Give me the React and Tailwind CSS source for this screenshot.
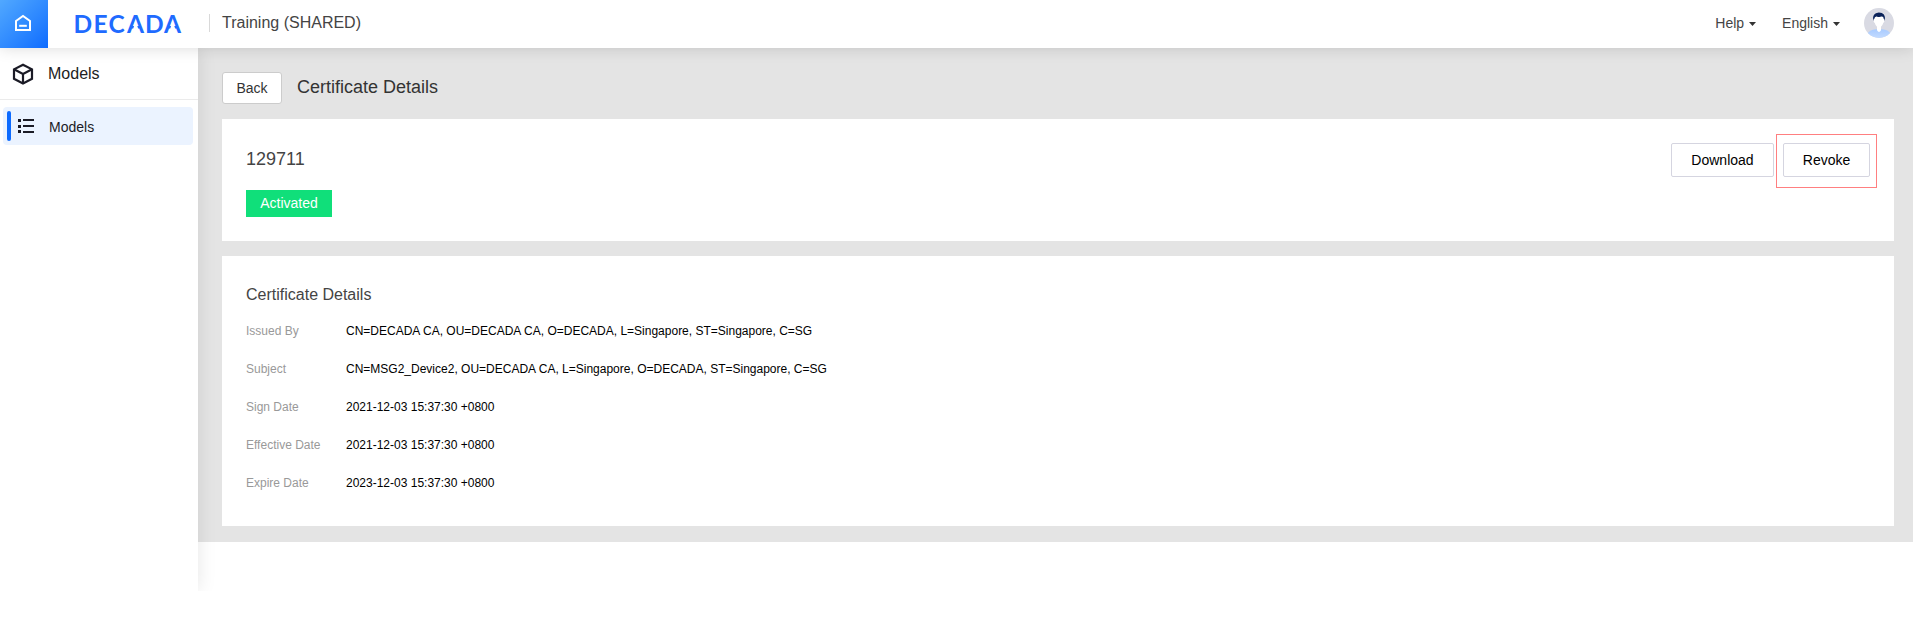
const rows = [
  ['Issued By', 'CN=DECADA CA, OU=DECADA CA, O=DECADA, L=Singapore, ST=Singapore, C=SG'],
  ['Subject', 'CN=MSG2_Device2, OU=DECADA CA, L=Singapore, O=DECADA, ST=Singapore, C=SG'],
  ['Sign Date', '2021-12-03 15:37:30 +0800'],
  ['Effective Date', '2021-12-03 15:37:30 +0800'],
  ['Expire Date', '2023-12-03 15:37:30 +0800'],
];

function HomeIcon() {
  return (
    <svg width="18" height="18" viewBox="0 0 18 18" fill="none" stroke="white" strokeWidth="2">
      <path d="M2 7 L9 1.9 L16 7 V16 H2 Z" />
      <path d="M5.2 11.8 H12.8" />
    </svg>
  );
}

function Logo() {
  return (
    <svg width="114" height="40" viewBox="0 0 114 40" className="font-['Lato','Liberation_Sans',sans-serif]">
      <text x="1.5 21.5 36.5 55 73 92" y="28.5" fontSize="24.5" fontWeight="700" fill="#1f6bff">
        DECADA
      </text>
      <g fill="white">
        <path d="M60 28.6 L63.7 17 L67.4 28.6 Z" />
        <path d="M97 28.6 L100.7 17 L104.4 28.6 Z" />
      </g>
    </svg>
  );
}

function CubeIcon() {
  return (
    <svg width="22" height="22" viewBox="0 0 22 22" fill="none" stroke="#1b1b26" strokeWidth="2.2" strokeLinejoin="miter">
      <path d="M11 1.7 L20 6.3 V15.8 L11 20.4 L2 15.8 V6.3 Z" />
      <path d="M2 6.3 L11 11 L20 6.3 M11 11 V20.4" />
    </svg>
  );
}

function ListIcon() {
  return (
    <svg width="18" height="16" viewBox="0 0 18 16" fill="#1b1b26">
      <rect x="1" y="1" width="3" height="3" />
      <rect x="1" y="7" width="3" height="3" />
      <rect x="1" y="12" width="3" height="3" />
      <rect x="6" y="1" width="11" height="2" />
      <rect x="6" y="7" width="11" height="2" />
      <rect x="6" y="13" width="11" height="2" />
    </svg>
  );
}

function Caret() {
  return (
    <svg width="7" height="4" viewBox="0 0 7 4" fill="#333" className="mt-0.5">
      <path d="M0 0 H7 L3.5 4 Z" />
    </svg>
  );
}

function Avatar() {
  return (
    <svg width="30" height="30" viewBox="0 0 30 30">
      <defs>
        <clipPath id="avatar">
          <circle cx="15" cy="15" r="15" />
        </clipPath>
        <linearGradient id="shirt" x1="0" y1="0" x2="0" y2="1">
          <stop offset="0" stopColor="#a9cbff" />
          <stop offset="1" stopColor="#c3dbff" />
        </linearGradient>
      </defs>
      <g clipPath="url(#avatar)">
        <rect width="30" height="30" fill="#d9dae3" />
        <path d="M3 27 Q5 21.5 12 21.3 H18 Q25 21.5 27 27 V30 H3 Z" fill="url(#shirt)" />
        <path d="M9.2 12.5 Q8 5 14.8 4.6 Q22 4.6 20.8 12.5 Z" fill="#0a2259" />
        <path d="M10.2 11 Q10.6 8.2 12.6 8.4 Q15 9.3 17.6 8.6 Q19.5 8.4 19.8 11 Q20.8 11 20.5 13 Q20 14.6 19.2 15 Q18.4 18 17 18.8 V22.2 Q15 25.6 13 22.2 V18.8 Q11.6 18 10.8 15 Q9.8 14.6 9.5 13 Q9.2 11 10.2 11 Z" fill="white" />
      </g>
    </svg>
  );
}

export default function App() {
  return (
    <div className="h-[626px] w-full overflow-hidden bg-white font-['Liberation_Sans',Arial,sans-serif] text-sm text-[#333]">
      <header className="relative z-20 flex h-12 items-center bg-white shadow-[0_0_16px_rgba(0,0,0,0.15)]">
        <div className="flex h-12 w-12 items-center justify-center bg-linear-to-br from-[#51a8ff] to-[#0d6bff] pr-0.5 pb-0.5">
          <HomeIcon />
        </div>
        <div className="ml-6">
          <Logo />
        </div>
        <div className="mb-0.5 ml-[23px] h-[18px] w-px bg-[#d9d9d9]" />
        <div className="mb-[3px] ml-3 text-base leading-5 text-[#444]">Training (SHARED)</div>
        <div className="mr-[19px] ml-auto flex items-center pb-0.5 text-[#444]">
          <div className="flex items-center gap-[5px]">
            Help <Caret />
          </div>
          <div className="ml-[26px] flex items-center gap-[5px]">
            English <Caret />
          </div>
          <div className="ml-6">
            <Avatar />
          </div>
        </div>
      </header>

      <div className="flex h-[543px] items-start overflow-hidden">
        <aside className="relative z-10 h-full w-[198px] shrink-0 bg-white shadow-[0_0_18px_rgba(0,0,0,0.1)]">
          <div className="flex h-[52px] items-center gap-[14px] border-b border-[#ebebeb] pl-3 text-base text-[#222]">
            <CubeIcon />
            <span>Models</span>
          </div>
          <div className="mt-[7px] ml-[3px] flex h-[38px] w-[190px] items-center rounded-sm bg-[#ebf3ff] pl-1 text-[#1b1b26]">
            <div className="h-[30px] w-1 rounded-xs bg-[#0d6bff]" />
            <div className="ml-1.5">
              <ListIcon />
            </div>
            <span className="mt-0.5 ml-[14px]">Models</span>
          </div>
        </aside>

        <main className="h-[494px] grow bg-[#e4e4e4] pt-6 pr-[19px] pl-6">
          <div className="flex items-center">
            <button className="h-8 w-[60px] rounded-[3px] border border-[#ccc] bg-white text-sm">Back</button>
            <h1 className="mb-0.5 ml-[15px] text-lg leading-6">Certificate Details</h1>
          </div>

          <section className="mt-[15px] flex h-[122px] justify-between bg-white pl-6">
            <div className="pt-7">
              <div className="text-lg leading-6 text-[#444]">129711</div>
              <div className="mt-[19px] flex h-[27px] w-[86px] items-center justify-center bg-[#10df7a] pb-px text-white">Activated</div>
            </div>
            <div className="flex items-start gap-0.5 pt-[15px] pr-[17px] text-black">
              <button className="mt-[9px] h-[34px] w-[103px] rounded-xs border border-[#d5d5e0] bg-white">Download</button>
              <div className="flex h-[54px] w-[101px] border border-[#ff7f80] pt-2 pl-1.5">
                <button className="h-[34px] w-[87px] rounded-xs border border-[#d5d5e0] bg-white">Revoke</button>
              </div>
            </div>
          </section>

          <section className="mt-[15px] h-[270px] bg-white pt-[29px] pl-6">
            <h2 className="text-base leading-5 text-[#444]">Certificate Details</h2>
            <dl className="mt-[7px] text-xs">
              {rows.map(([label, value]) => (
                <div key={label} className="flex h-[38px] items-center">
                  <dt className="w-[100px] text-[#999]">{label}</dt>
                  <dd className="text-black">{value}</dd>
                </div>
              ))}
            </dl>
          </section>
        </main>
      </div>
    </div>
  );
}
